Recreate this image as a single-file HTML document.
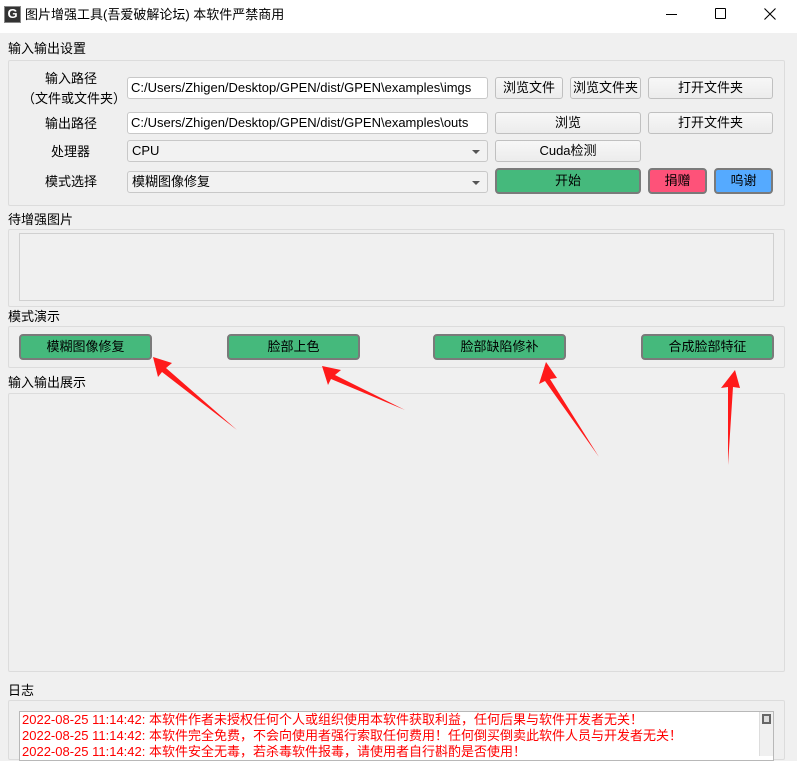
<!DOCTYPE html>
<html><head><meta charset="utf-8"><style>
*{box-sizing:border-box;margin:0;padding:0}
body{width:797px;height:756px;overflow:hidden;background:#f0f0f0;font-family:"Liberation Sans","Noto Sans CJK SC",sans-serif;font-size:13px;color:#000;position:relative}
.a{position:absolute}
.tb{left:0;top:0;width:797px;height:33px;background:#fff}
.lbl{position:absolute;font-size:13px;line-height:16px;white-space:nowrap}
.grp{position:absolute;border:1px solid #dcdcdc;background:#efefef;border-radius:2px}
.inp{position:absolute;background:#fff;border:1px solid #c8c8c8;border-radius:3px;padding-left:3px;font-size:13px;line-height:20px;white-space:nowrap;overflow:hidden}
.cmb{position:absolute;background:#f2f2f2;border:1px solid #c8c8c8;border-radius:3px;padding-left:4px;font-size:13px;line-height:20px}
.cmb:after{content:"";position:absolute;right:7px;top:9px;border-left:4px solid transparent;border-right:4px solid transparent;border-top:4px solid #555}
.btn{position:absolute;background:linear-gradient(#f7f7f7,#ececec);border:1px solid #c0c0c0;border-radius:3px;text-align:center;font-size:13px;line-height:20px;white-space:nowrap}
.g{background:#45b97c;border:2px solid #7a7a7a;border-radius:4px;text-align:center;position:absolute;line-height:21px}
</style></head><body>
<div class="a tb"></div>
<div class="a" style="left:4px;top:6px;width:17px;height:17px;background:#333;border:1px solid #888"><div style="color:#fff;font-weight:bold;font-size:13px;line-height:14px;text-align:center">G</div></div>
<div class="lbl" style="left:25px;top:7px">图片增强工具(吾爱破解论坛) 本软件严禁商用</div>
<div class="a" style="left:666px;top:14px;width:11px;height:1px;background:#000"></div>
<div class="a" style="left:715px;top:8px;width:11px;height:11px;border:1px solid #000;border-radius:1px"></div>
<svg class="a" style="left:764px;top:8px" width="12" height="12"><path d="M0.5 0.5L11.5 11.5M11.5 0.5L0.5 11.5" stroke="#000" stroke-width="1.1"/></svg>

<div class="lbl" style="left:8px;top:41px">输入输出设置</div>
<div class="grp" style="left:8px;top:60px;width:777px;height:146px"></div>
<div class="lbl" style="left:45px;top:71px">输入路径</div>
<div class="lbl" style="left:22px;top:91px">（文件或文件夹）</div>
<div class="inp" style="left:127px;top:77px;width:361px;height:22px">C:/Users/Zhigen/Desktop/GPEN/dist/GPEN\examples\imgs</div>
<div class="btn" style="left:495px;top:77px;width:68px;height:22px">浏览文件</div>
<div class="btn" style="left:570px;top:77px;width:71px;height:22px">浏览文件夹</div>
<div class="btn" style="left:648px;top:77px;width:125px;height:22px">打开文件夹</div>
<div class="lbl" style="left:45px;top:116px">输出路径</div>
<div class="inp" style="left:127px;top:112px;width:361px;height:22px">C:/Users/Zhigen/Desktop/GPEN/dist/GPEN\examples\outs</div>
<div class="btn" style="left:495px;top:112px;width:146px;height:22px">浏览</div>
<div class="btn" style="left:648px;top:112px;width:125px;height:22px">打开文件夹</div>
<div class="lbl" style="left:51px;top:144px">处理器</div>
<div class="cmb" style="left:127px;top:140px;width:361px;height:22px">CPU</div>
<div class="btn" style="left:495px;top:140px;width:146px;height:22px">Cuda检测</div>
<div class="lbl" style="left:45px;top:174px">模式选择</div>
<div class="cmb" style="left:127px;top:171px;width:361px;height:22px">模糊图像修复</div>
<div class="g" style="left:495px;top:168px;width:146px;height:26px">开始</div>
<div class="g" style="left:648px;top:168px;width:59px;height:26px;background:#fe5279">捐赠</div>
<div class="g" style="left:714px;top:168px;width:59px;height:26px;background:#55aaff">呜谢</div>

<div class="lbl" style="left:8px;top:212px">待增强图片</div>
<div class="grp" style="left:8px;top:229px;width:777px;height:78px"></div>
<div class="a" style="left:19px;top:233px;width:755px;height:68px;border:1px solid #d0d0d0;background:#f0f0f0"></div>

<div class="lbl" style="left:8px;top:309px">模式演示</div>
<div class="grp" style="left:8px;top:326px;width:777px;height:42px"></div>
<div class="g" style="left:19px;top:334px;width:133px;height:26px">模糊图像修复</div>
<div class="g" style="left:227px;top:334px;width:133px;height:26px">脸部上色</div>
<div class="g" style="left:433px;top:334px;width:133px;height:26px">脸部缺陷修补</div>
<div class="g" style="left:641px;top:334px;width:133px;height:26px">合成脸部特征</div>

<div class="lbl" style="left:8px;top:375px">输入输出展示</div>
<div class="grp" style="left:8px;top:393px;width:777px;height:279px"></div>

<div class="lbl" style="left:8px;top:683px">日志</div>
<div class="grp" style="left:8px;top:700px;width:777px;height:60px"></div>
<div class="a" style="left:19px;top:711px;width:755px;height:50px;background:#fff;border:1px solid #b8b8b8"></div>
<div class="a" style="left:759px;top:712px;width:14px;height:44px;background:#f0f0f0;border-left:1px solid #ddd"><div style="margin:2px;height:10px;border:2px solid #666;background:#ddd"></div></div>
<div class="lbl" style="left:22px;top:712px;color:#f00">2022-08-25 11:14:42: 本软件作者未授权任何个人或组织使用本软件获取利益，任何后果与软件开发者无关！</div>
<div class="lbl" style="left:22px;top:728px;color:#f00">2022-08-25 11:14:42: 本软件完全免费，不会向使用者强行索取任何费用！任何倒买倒卖此软件人员与开发者无关！</div>
<div class="lbl" style="left:22px;top:744px;color:#f00">2022-08-25 11:14:42: 本软件安全无毒，若杀毒软件报毒，请使用者自行斟酌是否使用！</div>

<svg class="a" style="left:0;top:0" width="797" height="756">
<g fill="#ff1a1a">
<polygon points="153,357 172,363 166,368 237,430 162,372 158,377"/>
<polygon points="322,366 341,370 335,375 405,410 331,379 328,385"/>
<polygon points="546,362 557,378 550,379 599,457 545,381 539,384"/>
<polygon points="735,370 740,388 733,387 728,465 728,387 721,388"/>
</g>
</svg>
</body></html>
